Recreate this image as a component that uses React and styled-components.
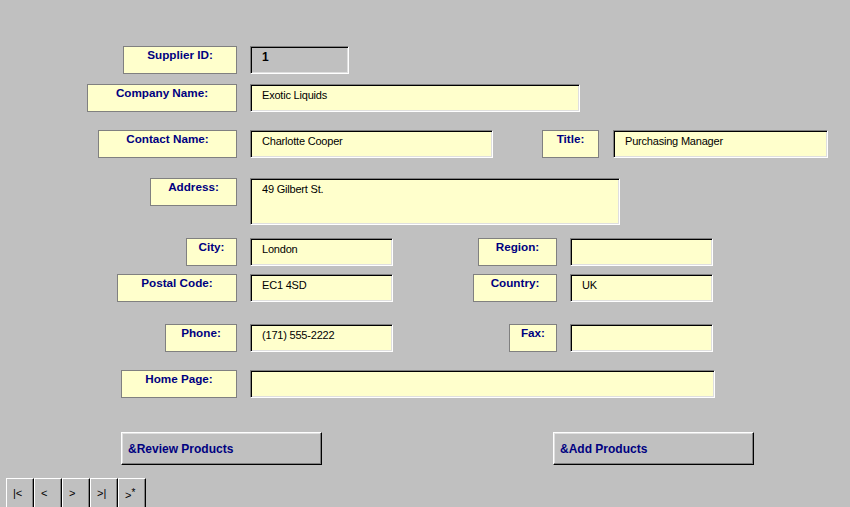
import styled, { createGlobalStyle } from 'styled-components';

const Global = createGlobalStyle`
  html, body {
    margin: 0;
    padding: 0;
    background: #c0c0c0;
  }
  body {
    font-family: "Liberation Sans", Arial, sans-serif;
  }
`;

const Page = styled.div`
  width: 850px;
  height: 507px;
  overflow: hidden;
  background: #c0c0c0;
  display: flex;
  flex-direction: column;
`;

const Row = styled.div`
  display: flex;
  align-items: flex-start;
  margin-top: ${(p) => p.$top}px;
`;

const Slot = styled.div`
  width: ${(p) => p.$w}px;
  flex: none;
  display: flex;
  justify-content: flex-end;
`;

const Label = styled.div`
  box-sizing: border-box;
  width: ${(p) => p.$w}px;
  height: 28px;
  background: #ffffcc;
  border: 1px solid #808080;
  color: #000080;
  font-size: 11.7px;
  font-weight: bold;
  text-align: center;
  padding-top: 1px;
  line-height: 14px;
  white-space: nowrap;
`;

const Field = styled.div`
  box-sizing: border-box;
  flex: none;
  width: ${(p) => p.$w}px;
  height: ${(p) => p.$h || 28}px;
  margin-left: ${(p) => p.$gap || 13}px;
  background: ${(p) => (p.$locked ? '#c0c0c0' : '#ffffcc')};
  border-top: 1px solid #808080;
  border-left: 1px solid #808080;
  border-right: 1px solid #ffffff;
  border-bottom: 1px solid #ffffff;
  box-shadow: inset 1px 1px 0 #000000, inset -1px -1px 0 #dfdfdf;
  padding: 4px 0 0 11px;
  font-size: ${(p) => (p.$locked ? 12 : 11)}px;
  letter-spacing: -0.2px;
  line-height: 13px;
  font-weight: ${(p) => (p.$locked ? 'bold' : 'normal')};
  color: #000;
  white-space: nowrap;
`;

const ButtonRow = styled.div`
  display: flex;
  margin-top: 34px;
  padding-left: 121px;
  gap: 231px;
`;

const Button = styled.div`
  box-sizing: border-box;
  width: ${(p) => p.$w}px;
  height: 33px;
  background: #c0c0c0;
  border-top: 1px solid #ffffff;
  border-left: 1px solid #ffffff;
  border-right: 1px solid #000000;
  border-bottom: 1px solid #000000;
  box-shadow: inset -1px -1px 0 #808080, inset 1px 1px 0 #dfdfdf;
  display: flex;
  align-items: center;
  padding-left: 6px;
  color: #000080;
  font-size: 12px;
  font-weight: bold;
`;

const NavBar = styled.div`
  display: flex;
  margin-top: 13px;
  padding-left: 6px;
`;

const NavButton = styled.div`
  box-sizing: border-box;
  width: 28px;
  height: 30px;
  background: #c0c0c0;
  border-top: 1px solid #ffffff;
  border-left: 1px solid #ffffff;
  border-right: 1px solid #000000;
  box-shadow: inset -1px 0 0 #808080;
  font-size: 11px;
  color: #000;
  padding: 8px 0 0 6px;
  white-space: nowrap;
`;

const Sup = styled.sup`
  font-size: 10px;
  vertical-align: 3px;
`;

const App = () => {
  return (
    <Page>
      <Global />
      <Row $top={46}>
        <Slot $w={237}>
          <Label $w={114}>Supplier ID:</Label>
        </Slot>
        <Field $w={99} $locked>1</Field>
      </Row>
      <Row $top={10}>
        <Slot $w={237}>
          <Label $w={150}>Company Name:</Label>
        </Slot>
        <Field $w={330}>Exotic Liquids</Field>
      </Row>
      <Row $top={18}>
        <Slot $w={237}>
          <Label $w={139}>Contact Name:</Label>
        </Slot>
        <Field $w={243}>Charlotte Cooper</Field>
        <Slot $w={106}>
          <Label $w={57}>Title:</Label>
        </Slot>
        <Field $w={215} $gap={14}>Purchasing Manager</Field>
      </Row>
      <Row $top={20}>
        <Slot $w={237}>
          <Label $w={87}>Address:</Label>
        </Slot>
        <Field $w={370} $h={47}>49 Gilbert St.</Field>
      </Row>
      <Row $top={13}>
        <Slot $w={237}>
          <Label $w={51}>City:</Label>
        </Slot>
        <Field $w={143}>London</Field>
        <Slot $w={164}>
          <Label $w={79}>Region:</Label>
        </Slot>
        <Field $w={143} />
      </Row>
      <Row $top={8}>
        <Slot $w={237}>
          <Label $w={120}>Postal Code:</Label>
        </Slot>
        <Field $w={143}>EC1 4SD</Field>
        <Slot $w={164}>
          <Label $w={84}>Country:</Label>
        </Slot>
        <Field $w={143}>UK</Field>
      </Row>
      <Row $top={22}>
        <Slot $w={237}>
          <Label $w={72}>Phone:</Label>
        </Slot>
        <Field $w={143}>(171) 555-2222</Field>
        <Slot $w={164}>
          <Label $w={48}>Fax:</Label>
        </Slot>
        <Field $w={143} />
      </Row>
      <Row $top={18}>
        <Slot $w={237}>
          <Label $w={116}>Home Page:</Label>
        </Slot>
        <Field $w={465} />
      </Row>
      <ButtonRow>
        <Button $w={201}>&amp;Review Products</Button>
        <Button $w={201}>&amp;Add Products</Button>
      </ButtonRow>
      <NavBar>
        <NavButton>|&lt;</NavButton>
        <NavButton>&lt;</NavButton>
        <NavButton>&gt;</NavButton>
        <NavButton>&gt;|</NavButton>
        <NavButton>
          &gt;<Sup>*</Sup>
        </NavButton>
      </NavBar>
    </Page>
  );
};

export default App;
